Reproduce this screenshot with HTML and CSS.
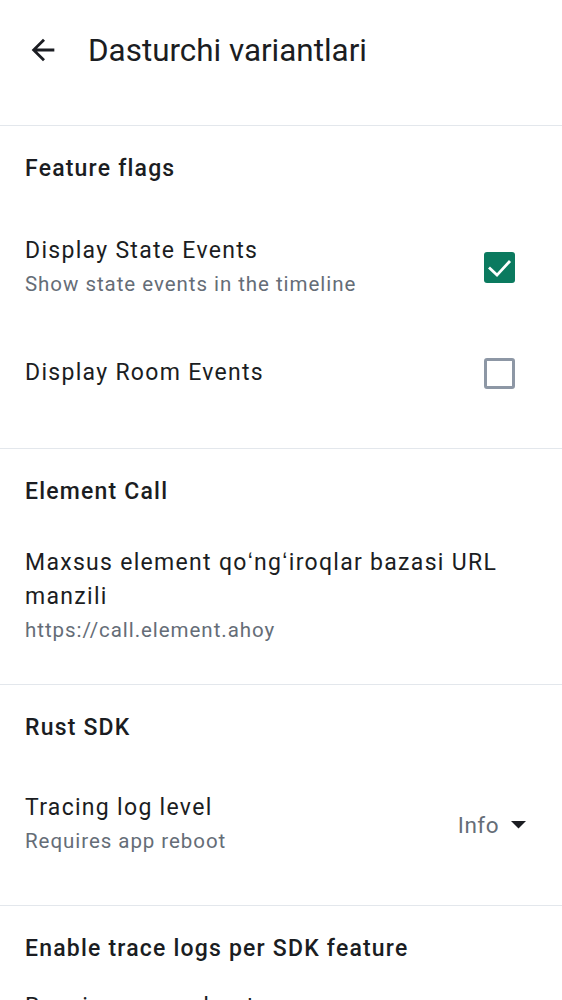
FILE: index.html
```html
<!DOCTYPE html>
<html>
<head>
<meta charset="utf-8">
<link rel="stylesheet" href="styles.css">
</head>
<body>
<div class="app">
  <header class="topbar">
    <svg class="back" width="34" height="34" viewBox="0 0 24 24"><path d="M20 11H7.83l5.59-5.59L12 4l-8 8 8 8 1.41-1.41L7.83 13H20v-2z" fill="#1b1d22"/></svg>
    <h1 class="title">Dasturchi variantlari</h1>
  </header>

  <section class="group group-flags">
    <h2 class="group-title">Feature flags</h2>
    <div class="row row-state">
      <div class="texts">
        <div class="label">Display State Events</div>
        <div class="sub">Show state events in the timeline</div>
      </div>
      <span class="check on">
        <svg width="31" height="31" viewBox="0 0 31 31"><path d="M5 15.5l8 7.6L26 9" fill="none" stroke="#fff" stroke-width="2.8" stroke-linecap="butt" stroke-linejoin="miter"/></svg>
      </span>
    </div>
    <div class="row row-room">
      <div class="texts">
        <div class="label">Display Room Events</div>
      </div>
      <span class="check off"></span>
    </div>
  </section>

  <section class="group">
    <h2 class="group-title">Element Call</h2>
    <div class="row row-url">
      <div class="texts">
        <div class="label">Maxsus element qoʻngʻiroqlar bazasi URL manzili</div>
        <div class="sub">https://call.element.ahoy</div>
      </div>
    </div>
  </section>

  <section class="group">
    <h2 class="group-title">Rust SDK</h2>
    <div class="row row-level">
      <div class="texts">
        <div class="label">Tracing log level</div>
        <div class="sub">Requires app reboot</div>
      </div>
      <div class="dropdown">
        <span>Info</span>
        <svg width="15" height="8" viewBox="0 0 15 8"><path d="M0 0h15L7.5 7.5z" fill="#1b1d22"/></svg>
      </div>
    </div>
  </section>

  <section class="group">
    <h2 class="group-title">Enable trace logs per SDK feature</h2>
    <div class="row row-last">
      <div class="texts">
        <div class="label">Requires app reboot</div>
      </div>
    </div>
  </section>
</div>
</body>
</html>
```
FILE: styles.css
```css
* { box-sizing: border-box; margin: 0; padding: 0; }
html, body { background: #fff; }
body {
  margin: 0;
  font-family: Roboto, "Liberation Sans", sans-serif;
  color: #1b1d22;
  width: 562px;
  height: 1000px;
  overflow: hidden;
}
.topbar {
  display: flex;
  align-items: center;
  height: 100px;
  padding-left: 26px;
  margin-bottom: 25px;
}
.back { margin-right: 28px; flex: none; }
.title {
  font-size: 31.4px;
  font-weight: 400;
  letter-spacing: 0;
}
.group {
  border-top: 1px solid #e3e7ec;
  padding: 0 25px;
}
.group-flags { padding-bottom: 26px; }
.group-title {
  font-size: 23px;
  font-weight: 500;
  letter-spacing: 1.2px;
  height: 84px;
  display: flex;
  align-items: center;
}
.row {
  display: flex;
  align-items: center;
  justify-content: space-between;
}
.texts { flex: 1; }
.label {
  font-size: 23px;
  line-height: 34px;
  letter-spacing: 1.3px;
}
.sub {
  font-size: 20.5px;
  line-height: 33px;
  color: #656d77;
  letter-spacing: 0.95px;
}
.row-state { padding: 24px 0 23px; }
.row-room { min-height: 98px; }
.row-url { padding: 13px 0 37px; }
.row-level { padding: 22px 0 47px; }
.row-last { padding-top: 0; }
.check {
  flex: none;
  width: 31px;
  height: 31px;
  border-radius: 3px;
  margin-right: 22px;
  display: flex;
  align-items: center;
  justify-content: center;
}
.check.on { background: #0b7a5f; }
.check.off { border: 3px solid #8d97a5; }
.dropdown {
  display: flex;
  align-items: center;
  gap: 12px;
  margin-right: 11px;
  font-size: 22.5px;
  letter-spacing: 0.5px;
  color: #656d77;
}
```
